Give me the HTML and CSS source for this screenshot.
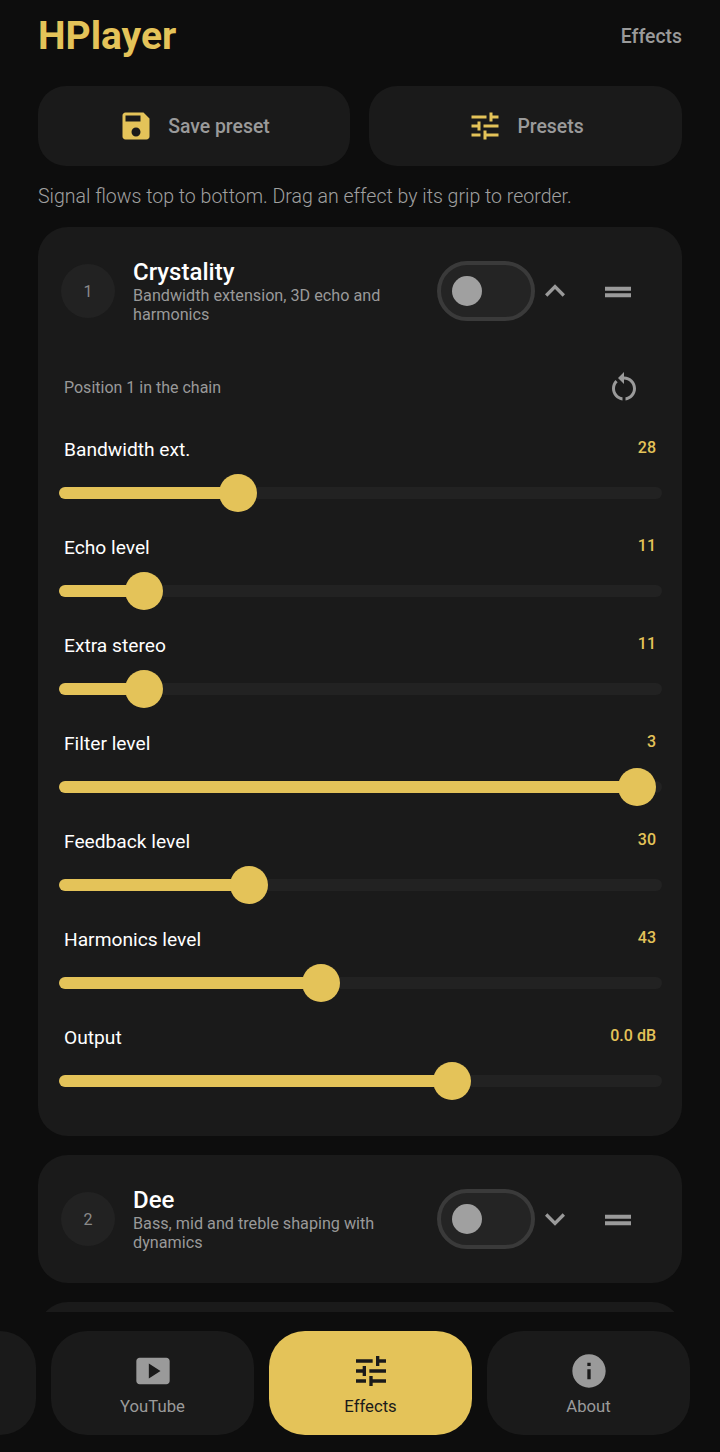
FILE: index.html
```html
<!DOCTYPE html>
<html lang="en">

<head>
    <meta charset="UTF-8">
    <meta name="viewport" content="width=device-width, initial-scale=1.0">
    <title>HPlayer</title>
    <link rel="stylesheet" href="styles.css">
</head>

<body>
    <main class="content">
        <header class="topbar">
            <h1 class="brand">HPlayer</h1>
            <span class="screen-name">Effects</span>
        </header>

        <div class="actions">
            <button class="action">
                <svg class="action-icon" viewBox="0 0 24 24"><path d="M17 3H5c-1.11 0-2 .9-2 2v14c0 1.1.89 2 2 2h14c1.1 0 2-.9 2-2V7l-4-4zm-5 16c-1.66 0-3-1.34-3-3s1.34-3 3-3 3 1.34 3 3-1.34 3-3 3zm3-10H5V5h10v4z"/></svg>
                Save preset
            </button>
            <button class="action">
                <svg class="action-icon" viewBox="0 0 24 24"><path d="M3 17v2h6v-2H3zM3 5v2h10V5H3zm10 16v-2h8v-2h-8v-2h-2v6h2zM7 9v2H3v2h4v2h2V9H7zm14 4v-2H11v2h10zm-6-4h2V7h4V5h-4V3h-2v6z"/></svg>
                Presets
            </button>
        </div>

        <p class="hint">Signal flows top to bottom. Drag an effect by its grip to reorder.</p>

        <section class="card">
            <div class="card-head">
                <span class="badge">1</span>
                <div class="card-title">
                    <h2>Crystality</h2>
                    <p>Bandwidth extension, 3D echo and harmonics</p>
                </div>
                <span class="toggle"><span class="toggle-knob"></span></span>
                <svg class="head-icon" viewBox="0 0 24 24"><path d="M12 8l-6 6 1.41 1.41L12 10.83l4.59 4.58L18 14z"/></svg>
                <svg class="head-icon grip" viewBox="0 0 40 40"><path d="M7 15.7h26v4H7zM7 22.3h26v4H7z"/></svg>
            </div>

            <div class="card-body">
                <div class="position">
                    <span>Position 1 in the chain</span>
                    <svg class="reset" viewBox="0 0 24 24"><path d="M12 5V2L8 6l4 4V7c3.31 0 6 2.69 6 6 0 2.97-2.17 5.43-5 5.91v2.02c3.95-.49 7-3.85 7-7.93 0-4.42-3.58-8-8-8zm-6 8c0-1.65.67-3.15 1.76-4.24L6.34 7.34C4.9 8.79 4 10.79 4 13c0 4.08 3.05 7.44 7 7.93v-2.02c-2.83-.48-5-2.94-5-5.91z"/></svg>
                </div>

                <div class="param">
                    <div class="param-row"><span class="param-name">Bandwidth ext.</span><span class="param-value">28</span></div>
                    <div class="track"><div class="fill" style="width: 29.7%"></div></div>
                </div>
                <div class="param">
                    <div class="param-row"><span class="param-name">Echo level</span><span class="param-value">11</span></div>
                    <div class="track"><div class="fill" style="width: 14.1%"></div></div>
                </div>
                <div class="param">
                    <div class="param-row"><span class="param-name">Extra stereo</span><span class="param-value">11</span></div>
                    <div class="track"><div class="fill" style="width: 14.1%"></div></div>
                </div>
                <div class="param">
                    <div class="param-row"><span class="param-name">Filter level</span><span class="param-value">3</span></div>
                    <div class="track"><div class="fill" style="width: 95.9%"></div></div>
                </div>
                <div class="param">
                    <div class="param-row"><span class="param-name">Feedback level</span><span class="param-value">30</span></div>
                    <div class="track"><div class="fill" style="width: 31.5%"></div></div>
                </div>
                <div class="param">
                    <div class="param-row"><span class="param-name">Harmonics level</span><span class="param-value">43</span></div>
                    <div class="track"><div class="fill" style="width: 43.4%"></div></div>
                </div>
                <div class="param">
                    <div class="param-row"><span class="param-name">Output</span><span class="param-value">0.0 dB</span></div>
                    <div class="track"><div class="fill" style="width: 65.2%"></div></div>
                </div>
            </div>
        </section>

        <section class="card">
            <div class="card-head">
                <span class="badge">2</span>
                <div class="card-title">
                    <h2>Dee</h2>
                    <p>Bass, mid and treble shaping with dynamics</p>
                </div>
                <span class="toggle"><span class="toggle-knob"></span></span>
                <svg class="head-icon" viewBox="0 0 24 24"><path d="M16.59 8.59L12 13.17 7.41 8.59 6 10l6 6 6-6z"/></svg>
                <svg class="head-icon grip" viewBox="0 0 40 40"><path d="M7 15.7h26v4H7zM7 22.3h26v4H7z"/></svg>
            </div>
        </section>

        <section class="card card-next"></section>
    </main>

    <nav class="tabs">
        <div class="tab"></div>
        <div class="tab">
            <svg class="tab-icon" viewBox="0 0 24 24"><path d="M20 4H4c-1.1 0-2 .9-2 2v12c0 1.1.9 2 2 2h16c1.1 0 2-.9 2-2V6c0-1.1-.9-2-2-2zM9.5 16.5v-9l7 4.5-7 4.5z"/></svg>
            <span>YouTube</span>
        </div>
        <div class="tab active">
            <svg class="tab-icon" viewBox="0 0 24 24"><path d="M3 17v2h6v-2H3zM3 5v2h10V5H3zm10 16v-2h8v-2h-8v-2h-2v6h2zM7 9v2H3v2h4v2h2V9H7zm14 4v-2H11v2h10zm-6-4h2V7h4V5h-4V3h-2v6z"/></svg>
            <span>Effects</span>
        </div>
        <div class="tab">
            <svg class="tab-icon" viewBox="0 0 24 24"><path d="M12 2C6.48 2 2 6.48 2 12s4.48 10 10 10 10-4.48 10-10S17.52 2 12 2zm1 15h-2v-6h2v6zm0-8h-2V7h2v2z"/></svg>
            <span>About</span>
        </div>
    </nav>
</body>

</html>
```

FILE: styles.css
```css
* {
    box-sizing: border-box;
    padding: 0;
    margin: 0;
}

html,
body {
    width: 100%;
    height: 100%;
}

body {
    display: flex;
    flex-direction: column;
    overflow: hidden;
    background: #0d0d0d;
    color: #fff;
    font-family: Roboto, "Liberation Sans", sans-serif;
}

svg {
    display: block;
    flex-shrink: 0;
    fill: currentColor;
}

.content {
    flex: 1;
    min-height: 0;
    overflow: hidden;
    margin-bottom: 19px;
    padding: 0 38px;
}

.topbar {
    display: flex;
    justify-content: space-between;
    align-items: center;
    height: 72px;
}

.brand {
    font-size: 39px;
    font-weight: 700;
    color: #e4c359;
}

.screen-name {
    font-size: 19.4px;
    font-weight: 500;
    color: #9a9a9a;
}

.actions {
    display: grid;
    grid-template-columns: 312px 1fr;
    gap: 19px;
    margin-top: 14px;
}

.action {
    display: flex;
    justify-content: center;
    align-items: center;
    gap: 14px;
    height: 80px;
    border: 0;
    border-radius: 28px;
    background: #1a1a1a;
    color: #9a9a9a;
    font: 500 19.4px Roboto, "Liberation Sans", sans-serif;
}

.action-icon {
    width: 36px;
    height: 36px;
    color: #e4c359;
}

.hint {
    margin: 19px 0 18px;
    height: 24px;
    font-size: 19.55px;
    line-height: 24px;
    font-weight: 300;
    color: #a0a0a0;
}

.card {
    margin-bottom: 19px;
    border-radius: 30px;
    background: #1a1a1a;
}

.card-next {
    height: 128px;
}

.card-head {
    display: flex;
    align-items: center;
    padding: 31px 44px 31px 23px;
}

.badge {
    flex-shrink: 0;
    display: flex;
    justify-content: center;
    align-items: center;
    width: 54px;
    height: 54px;
    border-radius: 50%;
    background: #222;
    color: #8a8a8a;
    font-size: 16px;
}

.card-title {
    flex: 1;
    min-width: 0;
    margin: 0 19px 0 18px;
}

.card-title h2 {
    font-size: 24px;
    line-height: 28px;
    font-weight: 500;
}

.card-title p {
    font-size: 16.2px;
    line-height: 19px;
    color: #999;
}

.toggle {
    flex-shrink: 0;
    display: flex;
    align-items: center;
    width: 98px;
    height: 60px;
    padding-left: 11px;
    border: 4px solid #3a3a3a;
    border-radius: 30px;
    background: #242424;
}

.toggle-knob {
    width: 30px;
    height: 30px;
    border-radius: 50%;
    background: #a0a0a0;
}

.head-icon {
    width: 40px;
    height: 40px;
    color: #9a9a9a;
}

.grip {
    margin-left: 23px;
}

.card-body {
    padding: 14px 26px 49px;
}

.position {
    display: flex;
    justify-content: space-between;
    align-items: center;
    height: 36px;
    margin-bottom: 32px;
    font-size: 16px;
    color: #999;
}

.reset {
    width: 36px;
    height: 36px;
    margin-right: 14px;
    color: #9a9a9a;
}

.param {
    height: 98px;
}

.param:last-child {
    height: 62px;
}

.param-row {
    display: flex;
    justify-content: space-between;
    align-items: flex-start;
    height: 50px;
    padding-top: 1px;
}

.param-name {
    font-size: 19.2px;
    line-height: 24px;
}

.param-value {
    font-size: 16px;
    line-height: 20px;
    font-weight: 500;
    color: #e4c359;
}

.track {
    height: 12px;
    margin: 0 -6px 0 -5px;
    border-radius: 6px;
    background: #222;
}

.fill {
    position: relative;
    height: 100%;
    border-radius: 6px;
    background: #e4c359;
}

.fill::after {
    content: "";
    position: absolute;
    top: -13px;
    right: -19px;
    width: 38px;
    height: 38px;
    border-radius: 50%;
    background: #e4c359;
}

.tabs {
    flex-shrink: 0;
    display: flex;
    justify-content: flex-end;
    gap: 15px;
    height: 121px;
    padding: 0 30px 17px 0;
}

.tab {
    flex: 0 0 203px;
    display: flex;
    flex-direction: column;
    align-items: center;
    padding-top: 20px;
    border-radius: 36px;
    background: #1a1a1a;
    color: #9a9a9a;
    font-size: 16.7px;
    line-height: 20px;
}

.tab-icon {
    width: 40px;
    height: 40px;
    margin-bottom: 6px;
}

.tab.active {
    background: #e4c359;
    color: #1a1a1a;
}
```
